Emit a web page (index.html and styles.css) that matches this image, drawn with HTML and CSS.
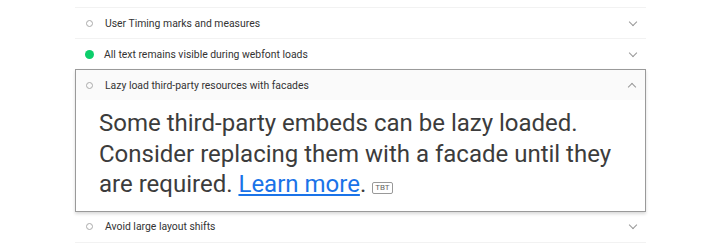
FILE: index.html
```html
<!DOCTYPE html>
<html lang="en">
<head>
    <meta charset="UTF-8">
    <title>Audits</title>
    <link rel="stylesheet" href="styles.css">
</head>
<body>
    <div class="audit-list">
        <div class="audit">
            <div class="audit-header">
                <span class="status status-na"></span>
                <span class="audit-title">User Timing marks and measures</span>
                <span class="chevron"></span>
            </div>
        </div>
        <div class="audit">
            <div class="audit-header">
                <span class="status status-pass"></span>
                <span class="audit-title">All text remains visible during webfont loads</span>
                <span class="chevron"></span>
            </div>
        </div>
        <div class="audit audit-open">
            <div class="audit-header">
                <span class="status status-na"></span>
                <span class="audit-title">Lazy load third-party resources with facades</span>
                <span class="chevron chevron-up"></span>
            </div>
            <div class="audit-description">
                Some third-party embeds can be lazy loaded. Consider replacing them with a facade until they are required. <a href="#">Learn more</a>. <span class="metric-tag">TBT</span>
            </div>
        </div>
        <div class="audit">
            <div class="audit-header">
                <span class="status status-na"></span>
                <span class="audit-title">Avoid large layout shifts</span>
                <span class="chevron"></span>
            </div>
        </div>
    </div>
</body>
</html>
```

FILE: styles.css
```css
body {
    margin: 0;
    background: #fff;
    font-family: Roboto, "Liberation Sans", sans-serif;
    color: #212121;
}
.audit-list {
    width: 571px;
    margin: 7px 0 0 75px;
}
.audit {
    border-top: 1px solid #f2f2f2;
}
.audit-header {
    display: flex;
    align-items: center;
    height: 30px;
    padding: 0 8px 0 11px;
    font-size: 10.4px;
}
.status {
    width: 7px;
    height: 7px;
    border-radius: 50%;
    margin-right: 12px;
    flex-shrink: 0;
}
.status-na {
    width: 5px;
    height: 5px;
    border: 1.3px solid #aaa;
}
.status-pass {
    width: 9px;
    height: 9px;
    margin-left: -1px;
    margin-right: 10px;
    background: #0cce6b;
}
.audit-title {
    flex: 1;
    color: #333;
}
.chevron {
    width: 5px;
    height: 5px;
    border-right: 1.2px solid #999;
    border-bottom: 1.2px solid #999;
    transform: rotate(45deg);
    margin-top: -3px;
    margin-right: 2px;
}
.chevron-up {
    transform: rotate(-135deg);
    margin-top: 3px;
}
.audit-open {
    border: 1px solid #9a9a9a;
    box-shadow: 0 2px 3px rgba(0,0,0,0.15);
}
.audit-open .audit-header {
    background: #fafafa;
    height: 30px;
    padding-left: 10px;
}
.audit-open + .audit {
    border-top: none;
}
.audit-description {
    padding: 8px 20px 11px 23px;
    font-size: 24px;
    line-height: 30.5px;
    color: #3c3c3c;
}
.audit-description a {
    color: #1a73e8;
}
.metric-tag {
    display: inline-block;
    font-size: 8px;
    line-height: 10px;
    padding: 0 2px;
    border: 1px solid #999;
    border-radius: 2px;
    color: #666;
    vertical-align: 2px;
}
.audit:last-child {
    border-bottom: 1px solid #f2f2f2;
}
```
